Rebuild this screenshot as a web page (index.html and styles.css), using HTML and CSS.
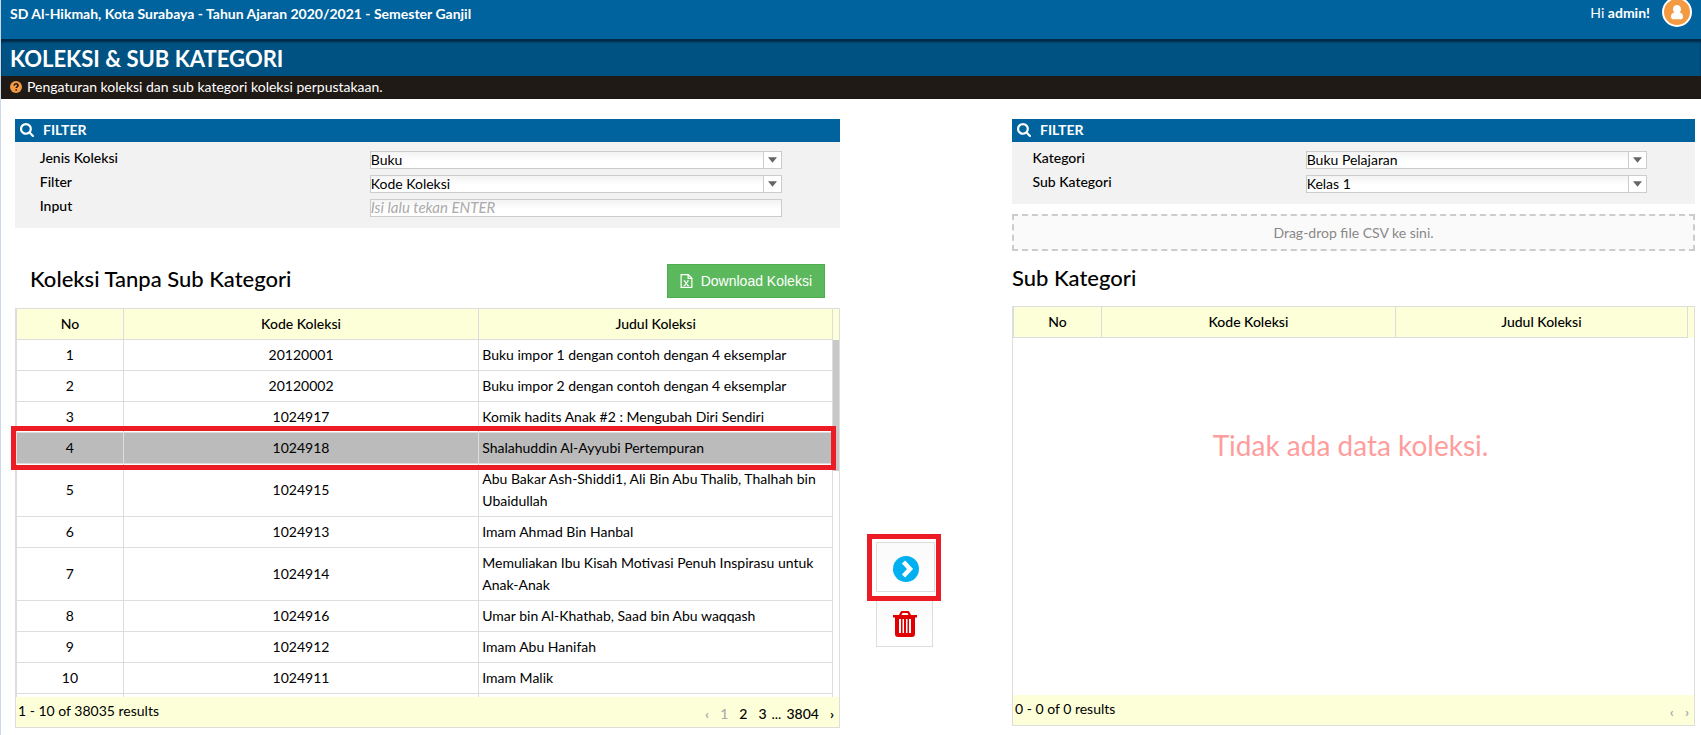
FILE: index.html
```html
<!DOCTYPE html>
<html lang="id">
<head>
<meta charset="utf-8">
<title>Koleksi &amp; Sub Kategori</title>
<link rel="stylesheet" href="styles.css">
</head>
<body>
<svg width="0" height="0" class="sprites" aria-hidden="true">
  <symbol id="icon-search" viewBox="0 0 1664 1664"><path d="M1152 704q0-185-131.500-316.500T704 256 387.500 387.500 256 704t131.500 316.500T704 1152t316.500-131.500T1152 704zm512 832q0 52-38 90t-90 38q-54 0-90-38l-343-342q-179 124-399 124-143 0-273.500-55.500t-225-150-150-225T0 704t55.500-273.500 150-225 225-150T704 0t273.500 55.500 225 150 150 225T1408 704q0 220-124 399l343 343q37 37 37 90z"/></symbol>
  <symbol id="icon-arrow" viewBox="0 0 10 6"><path d="M0 0h10L5 6z"/></symbol>
</svg>
<header class="topbar">
  <strong class="school">SD Al-Hikmah, Kota Surabaya - Tahun Ajaran 2020/2021 - Semester Ganjil</strong>
  <div class="user">
    <span>Hi <strong>admin!</strong></span>
    <svg class="avatar" viewBox="0 0 30 30" role="img" aria-label="admin"><circle cx="15" cy="15" r="14" fill="#f49a42" stroke="#fff" stroke-width="2"/><path fill="#fff" d="M15 8a4 4 0 0 1 4 4.200c0 1.400-.5 2.500-1.300 3.200 1.900.3 3.300 1.500 3.300 4.300 0 1.700-1 2.600-2.400 2.600h-7.200C10 22.300 9 21.400 9 19.700c0-2.800 1.400-4 3.300-4.300-.8-.7-1.300-1.800-1.300-3.200A4 4 0 0 1 15 8z"/></svg>
  </div>
</header>
<h1 class="title">KOLEKSI &amp; SUB KATEGORI</h1>
<p class="hint">
  <svg class="hint-icon" viewBox="0 0 12 12" aria-hidden="true"><circle cx="6" cy="6" r="6" fill="#f49a42"/><path d="M4 4.600C4.200 3.300 5 2.700 6 2.700c1.200 0 2 .7 2 1.700 0 1.400-1.800 1.400-1.800 2.700M6.200 8.200v1.500" fill="none" stroke="#201a17" stroke-width="1.600"/></svg>
  Pengaturan koleksi dan sub kategori koleksi perpustakaan.
</p>

<main class="layout">
  <section class="source">
    <h2 class="filter-head"><svg viewBox="0 0 14 14" aria-hidden="true"><use href="#icon-search"/></svg>FILTER</h2>
    <form class="filter">
      <label for="jenis">Jenis Koleksi</label>
      <span class="combo"><select id="jenis"><option>Buku</option></select><svg aria-hidden="true"><use href="#icon-arrow"/></svg></span>
      <label for="filter">Filter</label>
      <span class="combo"><select id="filter"><option>Kode Koleksi</option></select><svg aria-hidden="true"><use href="#icon-arrow"/></svg></span>
      <label for="input">Input</label>
      <input id="input" type="text" placeholder="Isi lalu tekan ENTER">
    </form>
    <div class="grid-title">
      <h3>Koleksi Tanpa Sub Kategori</h3>
      <button type="button" class="download"><svg viewBox="0 0 12 14" aria-hidden="true"><path d="M.6.6h7.200l3.600 3.600v9.200H.6zM7.600.6v3.800h3.800" fill="none" stroke="#fff" stroke-width="1.200"/><path d="M4 7l3.500 4.500M7.500 7L4 11.500" fill="none" stroke="#fff" stroke-width="1.200"/><path d="M3 6.800h2M6.500 6.800h2M3 11.500h2M6.500 11.500h2" fill="none" stroke="#fff" stroke-width=".8"/></svg>Download Koleksi</button>
    </div>
    <div class="grid">
      <div class="grid-view">
        <table>
          <thead><tr><th class="no">No</th><th class="kode">Kode Koleksi</th><th>Judul Koleksi</th></tr></thead>
          <tbody>
            <tr><td>1</td><td>20120001</td><td>Buku impor 1 dengan contoh dengan 4 eksemplar</td></tr>
            <tr><td>2</td><td>20120002</td><td>Buku impor 2 dengan contoh dengan 4 eksemplar</td></tr>
            <tr><td>3</td><td>1024917</td><td>Komik hadits Anak #2 : Mengubah Diri Sendiri</td></tr>
            <tr class="selected"><td>4</td><td>1024918</td><td>Shalahuddin Al-Ayyubi Pertempuran</td></tr>
            <tr><td>5</td><td>1024915</td><td>Abu Bakar Ash-Shiddi1, Ali Bin Abu Thalib, Thalhah bin Ubaidullah</td></tr>
            <tr><td>6</td><td>1024913</td><td>Imam Ahmad Bin Hanbal</td></tr>
            <tr><td>7</td><td>1024914</td><td>Memuliakan Ibu Kisah Motivasi Penuh Inspirasu untuk Anak-Anak</td></tr>
            <tr><td>8</td><td>1024916</td><td>Umar bin Al-Khathab, Saad bin Abu waqqash</td></tr>
            <tr><td>9</td><td>1024912</td><td>Imam Abu Hanifah</td></tr>
            <tr><td>10</td><td>1024911</td><td>Imam Malik</td></tr>
            <tr class="tail"><td></td><td></td><td></td></tr>
          </tbody>
        </table>
        <div class="gutter"><div class="thumb"></div></div>
        <div class="mark-row"></div>
      </div>
      <footer class="grid-foot">
        <span>1 - 10 of 38035 results</span>
        <nav class="pager"><span class="step off">‹</span><span class="off">1</span><a href="#">2</a><a href="#">3</a><span class="dots">...</span><a href="#">3804</a><a href="#" class="step">›</a></nav>
      </footer>
    </div>
  </section>

  <div class="actions">
    <div class="mark-button"><button type="button" class="action move" aria-label="Pindahkan"><svg viewBox="0 0 26 26"><circle cx="13" cy="13" r="13" fill="#00b0f0"/><path d="M10.500 6l6.500 7-6.500 7" fill="none" stroke="#fff" stroke-width="4.500"/></svg></button></div>
    <button type="button" class="action remove" aria-label="Hapus"><svg viewBox="0 0 24 26"><path fill="#e00000" fill-rule="evenodd" d="M0 4h6l1.500-3Q8 0 9 0h6q1 0 1.500 1L18 4h6v2.500h-2V23q0 3-3 3H5q-3 0-3-3V6.500H0zM8.500 4h7l-1-2h-5zM6 8v14h2V8zm3.500 0v14h1.500V8zm3.500 0v14h1.500V8zm3 0v14h2V8z"/></svg></button>
  </div>

  <section class="target">
    <h2 class="filter-head"><svg viewBox="0 0 14 14" aria-hidden="true"><use href="#icon-search"/></svg>FILTER</h2>
    <form class="filter">
      <label for="kategori">Kategori</label>
      <span class="combo"><select id="kategori"><option>Buku Pelajaran</option></select><svg aria-hidden="true"><use href="#icon-arrow"/></svg></span>
      <label for="sub">Sub Kategori</label>
      <span class="combo"><select id="sub"><option>Kelas 1</option></select><svg aria-hidden="true"><use href="#icon-arrow"/></svg></span>
    </form>
    <div class="dropzone">Drag-drop file CSV ke sini.</div>
    <h3 class="target-title">Sub Kategori</h3>
    <div class="grid">
      <div class="grid-view empty">
        <table>
          <thead><tr><th class="no">No</th><th class="kode">Kode Koleksi</th><th>Judul Koleksi</th></tr></thead>
        </table>
        <div class="gutter"></div>
        <p class="no-data">Tidak ada data koleksi.</p>
      </div>
      <footer class="grid-foot">
        <span>0 - 0 of 0 results</span>
        <nav class="pager"><span class="step off">‹</span><span class="step off">›</span></nav>
      </footer>
    </div>
  </section>
</main>
</body>
</html>
```
FILE: styles.css
```css
* { box-sizing: border-box; }
html { height: 100%; }
body {
  margin: 0;
  min-height: 100%;
  border-left: 1px solid #cdd8ea;
  background: #fff;
  color: #000;
  font: 14px/22px Lato, "Liberation Sans", sans-serif;
}
h1, h2, h3, p { margin: 0; }
button, input, select { font: inherit; color: inherit; }
.sprites { position: absolute; }

.topbar {
  display: flex;
  justify-content: space-between;
  height: 39px;
  padding: 3px 9px;
  background: #00639e;
  color: #fff;
}
.user { display: flex; gap: 12px; line-height: 20px; }
.avatar { width: 30px; height: 30px; margin-top: -6px; }
.title {
  padding: 6px 9px 3px;
  background: #005282;
  box-shadow: inset 0 3px 2px #002a45;
  color: #fff;
  font-size: 22px;
  line-height: 28px;
  font-weight: 700;
}
.hint {
  display: flex;
  align-items: center;
  gap: 5px;
  height: 23px;
  padding: 0 9px 2px;
  background: #201a17;
  color: #fff;
}
.hint-icon { width: 12px; height: 12px; }

.layout {
  display: grid;
  grid-template-columns: 825fr 172px 683fr;
  padding: 20px 6px 7px 14px;
}
.filter-head {
  display: flex;
  align-items: center;
  gap: 9px;
  height: 23px;
  padding: 0 5px 1px;
  background: #00639e;
  color: #fff;
  font-size: 14px;
  font-weight: 700;
}
.filter-head svg { width: 14px; height: 14px; fill: #fff; }
.filter {
  display: grid;
  grid-template-columns: 40fr 50fr 7fr;
  row-gap: 6px;
  padding: 9px 0 11px 3%;
  background: #f2f2f2;
}
.filter label { grid-column: 1; line-height: 14px; font-weight: 500; }
.filter input, .combo {
  grid-column: 2;
  width: 100%;
  height: 18px;
  border: 1px solid #ccc;
  background: linear-gradient(#f3f3f3, #fff 60%);
}
.filter input { padding: 0; border-radius: 0; }
.filter input::placeholder { color: #aaa; font-size: 15px; font-style: italic; opacity: 1; }
.combo { display: grid; }
.combo select, .combo svg { grid-area: 1 / 1; }
.combo select {
  width: 100%;
  height: 16px;
  padding: 0 18px 0 0;
  border: 0;
  background: none;
  line-height: 16px;
  appearance: none;
}
.combo svg {
  justify-self: end;
  width: 18px;
  height: 16px;
  padding: 5px 4px;
  border-left: 1px solid #ccc;
  background: #fff;
  fill: #666;
  pointer-events: none;
}

.grid-title {
  display: flex;
  align-items: flex-start;
  justify-content: space-between;
  padding: 36px 15px 10px;
}
h3 { font-size: 22px; line-height: 30px; font-weight: 500; }
.download {
  display: flex;
  align-items: center;
  gap: 8px;
  height: 34px;
  padding: 0 12px;
  border: 1px solid #4cae4c;
  background: #5cb85c;
  color: #fff;
  font: 14px/20px "Liberation Sans", Arial, sans-serif;
}
.download svg { width: 13px; height: 14px; }

.grid { border: 1px solid #ddd; }
.grid-view {
  position: relative;
  display: grid;
  grid-template-columns: 1fr 6px;
  align-items: start;
  height: 388px;
}
table {
  width: 100%;
  table-layout: fixed;
  border-collapse: separate;
  border-spacing: 0;
}
th, td {
  padding: 4px 3px;
  border: solid #ddd;
  border-width: 0 1px 1px 0;
  text-align: center;
}
th:first-child, td:first-child { border-left-width: 1px; }
th { background: #fdffd8; font-weight: 500; }
.no { width: 13.2%; }
.kode { width: 43.5%; }
td:last-child { text-align: left; }
.selected td { background: #bbb; }
.tail td { height: 3px; padding: 0; border-bottom: 0; }
.gutter { padding-top: 31px; background: linear-gradient(#fdffd8 31px, #fff 31px); }
.thumb { height: 131px; background: #c8c8c8; }
.mark-row {
  position: absolute;
  inset: 117px 3px auto -5px;
  height: 44px;
  border: 5px solid #ed1c24;
}
.empty { grid-template-rows: auto 1fr; }
.empty .gutter { height: 31px; }
.no-data {
  padding-top: 87px;
  color: #ff9c9c;
  font-size: 28px;
  line-height: 40px;
  text-align: center;
}
.grid-foot {
  display: flex;
  justify-content: space-between;
  height: 30px;
  padding: 3px 5px 3px 2px;
  background: #fdffd8;
}
.pager { display: flex; gap: 11px; padding-top: 3px; font-weight: 500; }
.pager a { color: #000; text-decoration: none; }
.pager .dots { margin: 0 -6px; font-weight: 400; }
.pager .step { font-weight: 700; }
.off { color: #aaa; }

.dropzone {
  margin-top: 10px;
  padding: 5px;
  border: 2px dashed #ccc;
  background: #fafafa;
  color: #888;
  line-height: 23px;
  text-align: center;
}
.target-title { padding: 12px 0 13px; }

.actions { padding: 415px 0 0 27px; }
.mark-button {
  width: 74px;
  height: 67px;
  padding: 3px 4px;
  border: 5px solid #ed1c24;
}
.action {
  display: grid;
  place-items: center;
  border: 1px solid #ddd;
  background: linear-gradient(#fafafa, #fff);
}
.move { width: 59px; height: 50px; padding: 3px 0 0; }
.move svg { width: 26px; height: 26px; }
.remove { width: 57px; height: 46px; margin-left: 9px; border-top: 0; }
.remove svg { width: 24px; height: 26px; }
```
